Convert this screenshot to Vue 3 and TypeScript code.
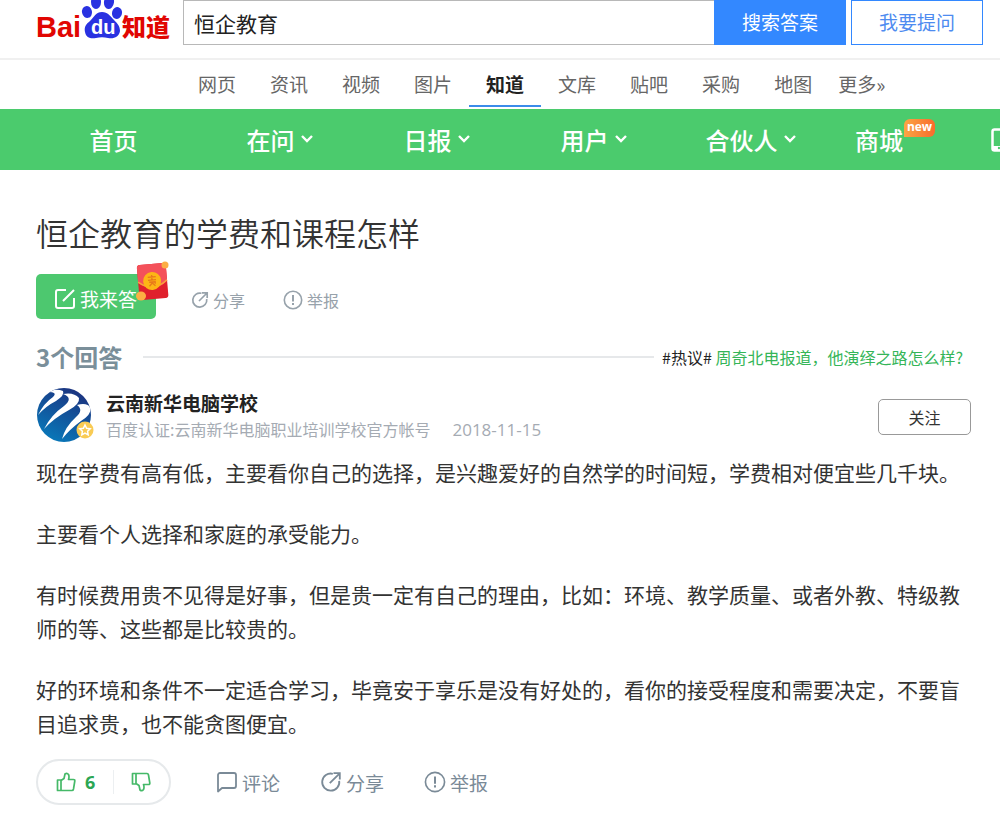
<script setup lang="ts">
interface NavItem {
  label: string
  menu: boolean
}

const tabs: string[] = ['网页', '资讯', '视频', '图片', '知道', '文库', '贴吧', '采购', '地图']
const activeTab = '知道'

const navItems: NavItem[] = [
  { label: '首页', menu: false },
  { label: '在问', menu: true },
  { label: '日报', menu: true },
  { label: '用户', menu: true },
  { label: '合伙人', menu: true },
]

const paragraphs: string[] = [
  '现在学费有高有低，主要看你自己的选择，是兴趣爱好的自然学的时间短，学费相对便宜些几千块。',
  '主要看个人选择和家庭的承受能力。',
  '有时候费用贵不见得是好事，但是贵一定有自己的理由，比如：环境、教学质量、或者外教、特级教师的等、这些都是比较贵的。',
  '好的环境和条件不一定适合学习，毕竟安于享乐是没有好处的，看你的接受程度和需要决定，不要盲目追求贵，也不能贪图便宜。',
]
</script>

<template>
  <div class="page">
    <header class="top">
      <a class="logo" href="#" aria-label="Baidu 知道">
        <svg width="140" height="45" viewBox="0 0 140 45">
          <g fill="#2932e1">
            <ellipse cx="51" cy="12" rx="5" ry="6" transform="rotate(-12 51 12)" />
            <ellipse cx="60" cy="2" rx="5" ry="7" />
            <ellipse cx="73" cy="2" rx="5" ry="7" transform="rotate(8 73 2)" />
            <ellipse cx="81" cy="13" rx="5" ry="6" transform="rotate(14 81 13)" />
            <path d="M66 12c-6 0-8 5-12 9-4 3-6 6-5 11 1 6 6 7 11 6 4-1 8-1 12 0 6 1 11-1 12-7 0-5-3-8-6-11-4-4-6-8-12-8z" />
          </g>
          <text class="logo-latin" x="0" y="37">Bai</text>
          <text class="logo-du" x="55" y="34">du</text>
          <text class="logo-cjk" x="86" y="36">知道</text>
        </svg>
      </a>
      <form class="search" @submit.prevent>
        <input class="search-input" type="text" value="恒企教育" aria-label="搜索" />
        <button class="search-btn" type="submit">搜索答案</button>
        <button class="ask-btn" type="button">我要提问</button>
      </form>
    </header>

    <nav class="tabs">
      <a v-for="t in tabs" :key="t" href="#" class="tab" :class="{ active: t === activeTab }">{{ t }}</a>
      <a href="#" class="tab more">更多»</a>
    </nav>

    <nav class="main-nav">
      <a v-for="n in navItems" :key="n.label" href="#" class="nav-item">
        <span class="nav-label">{{ n.label }}</span>
        <svg v-if="n.menu" class="caret" width="14" height="12" viewBox="0 0 14 12">
          <path d="M2 2l5 5 5-5" fill="none" stroke="#fff" stroke-width="2.4" />
        </svg>
      </a>
      <a href="#" class="nav-item mall">
        <span class="nav-label">商城<span class="new-badge">new</span></span>
      </a>
      <a href="#" class="nav-phone" aria-label="手机版">
        <svg width="18" height="24" viewBox="0 0 18 24">
          <rect x="1.5" y="1.5" width="15" height="21" rx="2" fill="none" stroke="#fff" stroke-width="2.5" />
          <path d="M2 18h14v4H2z" fill="#fff" />
          <circle cx="8" cy="20" r="1.2" fill="#4bcb6d" />
        </svg>
      </a>
    </nav>

    <main class="content">
      <h1 class="title">恒企教育的学费和课程怎样</h1>

      <div class="question-actions">
        <button class="answer-btn" type="button">
          <svg width="22" height="22" viewBox="0 0 22 22" fill="none" stroke="#fff" stroke-width="2">
            <path d="M12 2H4a2 2 0 0 0-2 2v14a2 2 0 0 0 2 2h14a2 2 0 0 0 2-2v-8M9 13L20 2" />
          </svg>
          <span>我来答</span>
          <svg class="packet" width="38" height="44" viewBox="0 0 38 44">
            <g transform="rotate(-5 19 20)">
              <rect x="5" y="4" width="29" height="35" rx="3" fill="#e0202c" />
              <path d="M5 22V7a3 3 0 0 1 3-3h23a3 3 0 0 1 3 3v15q-14 12-29 0z" fill="#f4515a" />
              <path d="M5 21q14 12 29 0" fill="none" stroke="#f9a13c" stroke-width="1.5" />
              <circle cx="19" cy="21" r="9" fill="#fdb515" />
              <path d="M15 17h8M15 20h8M19 15v5M16 22h6v2M16 26l3-3 3 3" fill="none" stroke="#e8791a" stroke-width="1.3" />
            </g>
            <circle cx="32" cy="5" r="3.5" fill="#fcae45" />
            <ellipse cx="8" cy="36" rx="5" ry="4.500" fill="#fcb043" />
          </svg>
        </button>
        <a href="#" class="link small share">
          <svg width="18" height="18" viewBox="0 0 18 18" fill="none" stroke="currentColor" stroke-width="1.7">
            <path d="M10.500 2.300A7 7 0 1 0 15.700 8M8 10L15.500 2.500M11 1.800h5.200V7" />
          </svg>
          分享
        </a>
        <a href="#" class="link small">
          <svg width="20" height="20" viewBox="0 0 20 20" fill="none" stroke="currentColor" stroke-width="1.6">
            <circle cx="10" cy="10" r="8.700" /><path d="M10 5v6.500M10 13v2" stroke-width="2" />
          </svg>
          举报
        </a>
      </div>

      <div class="count-row">
        <h2 class="count">3个回答</h2>
        <span class="rule"></span>
        <p class="hot">#热议# <a href="#">周奇北电报道，他演绎之路怎么样?</a></p>
      </div>

      <article class="answer">
        <div class="author">
          <div class="avatar">
            <svg width="58" height="56" viewBox="0 0 58 56">
              <defs>
                <linearGradient id="globe" x1="0.8" y1="0" x2="0.3" y2="1">
                  <stop offset="0" stop-color="#1d2f7c" />
                  <stop offset="1" stop-color="#0879ba" />
                </linearGradient>
                <clipPath id="disc"><circle cx="28" cy="28" r="27" /></clipPath>
              </defs>
              <circle cx="28" cy="28" r="27" fill="url(#globe)" />
              <g clip-path="url(#disc)" fill="#fff">
                <path d="M12 5Q20 1 27 4Q29 8 20 14Q10 19 2 28Q8 16 17 10Q22 5 12 5z" />
                <path d="M27 7Q38 5 43 11Q44 17 33 23Q18 31 8 42Q15 28 28 19Q38 11 27 7z" />
                <path d="M41 18Q51 15 55 21Q55 28 45 34Q34 42 26 52Q29 40 40 30Q48 23 41 18z" />
              </g>
              <circle cx="49" cy="43" r="8.500" fill="#f9cb54" />
              <path d="M49 38l1.600 3.300 3.600.5-2.600 2.500.6 3.600-3.200-1.700-3.200 1.700.6-3.600-2.600-2.500 3.600-.5z" fill="none" stroke="#fff" stroke-width="1.500" />
            </svg>
          </div>
          <div class="who">
            <a href="#" class="name">云南新华电脑学校</a>
            <p class="meta"><span>百度认证:云南新华电脑职业培训学校官方帐号</span><time class="date">2018-11-15</time></p>
          </div>
          <button class="follow" type="button">关注</button>
        </div>

        <div class="body">
          <p v-for="(p, i) in paragraphs" :key="i">{{ p }}</p>
        </div>

        <footer class="foot">
          <div class="votes">
            <button class="vote" type="button" aria-label="赞同">
              <svg width="20" height="20" viewBox="0 0 20 20" fill="none" stroke="#45b968" stroke-width="1.7" stroke-linejoin="round">
                <path d="M1.500 8h3.500v10.500H1.500zM5 8.500l3-2L9 2q2-1.500 3.500.5 1 2 0 5h5q1.500 0 1.300 1.500l-1.300 8q-.3 1.500-1.500 1.500H5z" />
              </svg>
              <span class="votes-count">6</span>
            </button>
            <span class="divider"></span>
            <button class="vote" type="button" aria-label="反对">
              <svg width="20" height="20" viewBox="0 0 20 20" fill="none" stroke="#45b968" stroke-width="1.7" stroke-linejoin="round">
                <path d="M1.500 1.500H5V12H1.500zM5 11.500l3 2L9 18q2 1.500 3.500-.5 1-2 0-5h5q1.500 0 1.300-1.500l-1.300-8Q17.200 1.500 16 1.500H5z" />
              </svg>
            </button>
          </div>
          <a href="#" class="link big">
            <svg width="22" height="22" viewBox="0 0 22 22" fill="none" stroke="currentColor" stroke-width="1.800" stroke-linejoin="round">
              <path d="M4 2h14a2 2 0 0 1 2 2v11a2 2 0 0 1-2 2H6l-4 3.500V4a2 2 0 0 1 2-2z" />
            </svg>
            评论
          </a>
          <a href="#" class="link big">
            <svg width="22" height="22" viewBox="0 0 18 18" fill="none" stroke="currentColor" stroke-width="1.500">
              <path d="M10.500 2.300A7 7 0 1 0 15.700 8M8 10L15.500 2.500M11 1.800h5.200V7" />
            </svg>
            分享
          </a>
          <a href="#" class="link big">
            <svg width="22" height="22" viewBox="0 0 20 20" fill="none" stroke="currentColor" stroke-width="1.500">
              <circle cx="10" cy="10" r="8.700" /><path d="M10 5v6.500M10 13v2" stroke-width="1.800" />
            </svg>
            举报
          </a>
        </footer>
      </article>
    </main>
  </div>
</template>

<style>
body {
  margin: 0;
  background: #fff;
}
</style>

<style scoped>
.page {
  font-family: "Noto Sans CJK SC", sans-serif;
  color: #333;
  overflow: hidden;
}
.page * {
  box-sizing: border-box;
}
a {
  color: inherit;
  text-decoration: none;
}
button,
input {
  font-family: inherit;
  margin: 0;
}
button {
  cursor: pointer;
}
p,
h1,
h2 {
  margin: 0;
}
svg {
  display: block;
  flex: none;
}
.top {
  display: flex;
  padding: 0 17px 13px 36px;
  border-bottom: 2px solid #f0f0f0;
}
.logo {
  width: 147px;
  flex: none;
}
.logo-latin {
  font: bold 29px "Liberation Sans", sans-serif;
  fill: #e10602;
}
.logo-du {
  font: bold 20px "Liberation Sans", sans-serif;
  fill: #fff;
}
.logo-cjk {
  font: 900 24px "Noto Sans CJK SC", sans-serif;
  fill: #e10602;
}
.search {
  display: flex;
  flex: 1;
  height: 45px;
}
.search-input {
  flex: 1;
  min-width: 0;
  border: 1px solid #b8b8b8;
  border-right: 0;
  padding: 0 10px;
  font-size: 21px;
  color: #222;
  border-radius: 0;
  outline: none;
}
.search-btn,
.ask-btn {
  width: 132px;
  padding: 0 0 3px;
  font-size: 19px;
  border: 1px solid #3388ff;
}
.search-btn {
  background: #3388ff;
  color: #fff;
}
.ask-btn {
  margin-left: 5px;
  background: #fff;
  color: #4e8bf0;
}
.tabs {
  display: flex;
  padding-left: 181px;
  height: 49px;
}
.tab {
  padding: 0 17px;
  font-size: 19px;
  line-height: 47px;
  color: #666;
  white-space: nowrap;
}
.tab.active {
  font-weight: bold;
  color: #222;
  height: 47px;
  border-bottom: 2px solid #3b8cea;
}
.tab.more {
  padding: 0 9px;
}
.main-nav {
  display: flex;
  height: 61px;
  padding-left: 35px;
  background: #4bcb6d;
  color: #fff;
  overflow: hidden;
}
.nav-item {
  flex: 0 0 157px;
  display: grid;
  grid-template-columns: 1fr auto 1fr;
  align-items: center;
  font-size: 24px;
  font-weight: 500;
  line-height: 60px;
}
.nav-label {
  grid-column: 2;
  position: relative;
}
.caret {
  margin-left: 5px;
}
.mall {
  flex-basis: 118px;
}
.new-badge {
  position: absolute;
  left: 49px;
  top: 9px;
  width: 31px;
  height: 18px;
  border-radius: 6px 6px 6px 0;
  background: linear-gradient(90deg, #fba544, #f96b2c);
  font: bold 12px/16px "Open Sans", sans-serif;
  text-align: center;
}
.nav-phone {
  display: flex;
  align-items: center;
  padding-left: 53px;
}
.content {
  padding: 40px 29px 0 36px;
}
.title {
  font-size: 32px;
  line-height: 44px;
  font-weight: 350;
}
.question-actions {
  display: flex;
  align-items: center;
  margin-top: 20px;
}
.answer-btn {
  position: relative;
  display: flex;
  align-items: center;
  gap: 4px;
  width: 120px;
  height: 45px;
  padding: 4px 0 0 18px;
  border: 0;
  border-radius: 5px;
  background: #4dc86f;
  color: #fff;
  font-size: 19px;
  white-space: nowrap;
}
.packet {
  position: absolute;
  left: 97px;
  top: -14px;
}
.link {
  display: flex;
  align-items: center;
}
.small {
  gap: 4px;
  margin-left: 38px;
  padding-top: 6px;
  font-size: 16px;
  color: #97a2ab;
}
.small.share {
  margin-left: 35px;
}
.count-row {
  display: flex;
  align-items: center;
  margin-top: 20px;
  padding-right: 8px;
  height: 36px;
}
.count {
  font-size: 24px;
  line-height: 36px;
  color: #7a8f9a;
}
.rule {
  flex: 1;
  height: 2px;
  margin: 0 8px 0 21px;
  background: #e6e8ea;
}
.hot {
  font-size: 16px;
  color: #222;
}
.hot a {
  color: #35b558;
}
.author {
  display: flex;
  align-items: flex-start;
  margin-top: 12px;
}
.who {
  flex: 1;
  margin-left: 12px;
  padding-top: 2px;
}
.name {
  display: block;
  font-size: 19px;
  line-height: 27px;
  font-weight: bold;
  color: #222;
}
.meta {
  font-size: 16px;
  line-height: 27px;
  color: #a5abb3;
}
.date {
  margin-left: 22px;
  font: 17px "Open Sans", sans-serif;
}
.follow {
  width: 93px;
  height: 36px;
  margin-top: 12px;
  padding: 0;
  border: 1px solid #999;
  border-radius: 5px;
  background: #fff;
  color: #333;
  font-size: 16px;
}
.body {
  margin-top: 12px;
  font-size: 21px;
  line-height: 34px;
}
.body p + p {
  margin-top: 27px;
}
.foot {
  display: flex;
  align-items: center;
  gap: 40px;
  margin-top: 19px;
}
.votes {
  display: flex;
  align-items: center;
  width: 135px;
  height: 46px;
  padding: 0 18px;
  margin-right: 5px;
  border: 2px solid #e6e9eb;
  border-radius: 23px;
  justify-content: space-between;
}
.vote {
  display: flex;
  align-items: center;
  gap: 9px;
  padding: 0;
  border: 0;
  background: none;
}
.votes-count {
  font: bold 18px "Open Sans", sans-serif;
  color: #2ca653;
}
.divider {
  width: 1px;
  height: 24px;
  background: #eceff1;
}
.big {
  gap: 4px;
  font-size: 19px;
  color: #7a8a97;
}
</style>
